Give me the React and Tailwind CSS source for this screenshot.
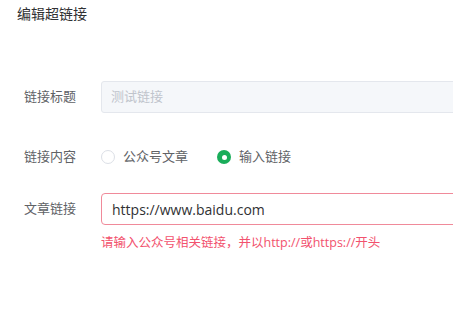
import React from 'react';

const font = { fontFamily: '"Open Sans", "Noto Sans CJK SC", sans-serif' };

const Radio = ({ checked, label }) => (
  <label className="flex items-center gap-[8px] cursor-pointer">
    {checked ? (
      <span className="w-[14px] h-[14px] rounded-full bg-[#1aad5a] flex items-center justify-center">
        <span className="w-[5px] h-[5px] rounded-full bg-white"></span>
      </span>
    ) : (
      <span className="w-[14px] h-[14px] rounded-full border border-[#dcdfe6] bg-white"></span>
    )}
    <span className="text-[13px] text-[#606266]">{label}</span>
  </label>
);

export default function App() {
  return (
    <div className="w-[453px] h-[323px] overflow-hidden bg-white" style={font}>
      <div className="pl-[17px] pt-[4px] text-[14px] leading-[20px] text-[#303133]">编辑超链接</div>

      <div className="mt-[57px]">
        {/* 链接标题 */}
        <div className="flex items-center h-[32px]">
          <div className="w-[101px] pl-[24px] text-[13px] text-[#606266] shrink-0">链接标题</div>
          <div className="w-[400px] h-[32px] shrink-0 border border-[#e4e7ed] bg-[#f5f7fa] rounded-[3px] flex items-center px-[9px] text-[13px] text-[#c0c4cc]">
            测试链接
          </div>
        </div>

        {/* 链接内容 */}
        <div className="flex items-center h-[32px] mt-[28px]">
          <div className="w-[101px] pl-[24px] text-[13px] text-[#606266] shrink-0">链接内容</div>
          <div className="flex items-center gap-[29px]">
            <Radio label="公众号文章" />
            <Radio checked label="输入链接" />
          </div>
        </div>

        {/* 文章链接 */}
        <div className="flex items-center h-[32px] mt-[20px]">
          <div className="w-[101px] pl-[24px] text-[13px] text-[#606266] shrink-0">文章链接</div>
          <div className="w-[400px] h-[32px] shrink-0 border border-[#f08a9a] bg-white rounded-[4px] flex items-center px-[10px] text-[14px] text-[#303133]">
            https://www.baidu.com
          </div>
        </div>
        <div className="pl-[101px] mt-[10px] text-[12.5px] leading-[16px] text-[#f2526e]">
          请输入公众号相关链接，并以http://或https://开头
        </div>
      </div>
    </div>
  );
}
